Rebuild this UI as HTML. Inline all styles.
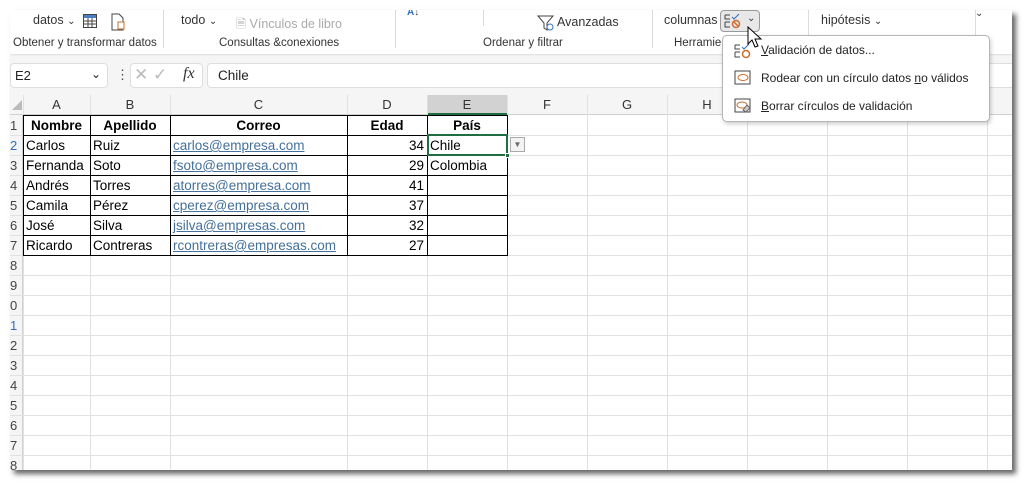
<!DOCTYPE html>
<html><head><meta charset="utf-8"><style>
*{margin:0;padding:0;box-sizing:border-box}
body{width:1026px;height:486px;background:#fff;position:relative;overflow:hidden;font-family:"Liberation Sans",sans-serif;color:#222}
.win{position:absolute;left:10px;top:10px;width:1002px;height:460px;background:#fff;box-shadow:4px 4px 5px rgba(0,0,0,.6);overflow:hidden}
.a{position:absolute;white-space:nowrap}
.rib{font-size:12.5px;color:#333}
.sep{position:absolute;width:1px;background:#dcdcdc;top:0;height:38px}
.grid div{position:absolute}
.cell{position:absolute;font-size:13.5px;line-height:20px;color:#000;white-space:nowrap}
.lnk{color:#44709a;text-decoration:underline}
.menu{position:absolute;left:722px;top:35px;width:268px;height:87px;background:#fff;border:1px solid #b5b5b5;border-radius:5px;box-shadow:1px 2px 4px rgba(0,0,0,.2)}
.menu .it{position:absolute;left:38px;font-size:12px;color:#222}
</style></head><body>
<div class="win">
 <div class="a" style="left:0;top:0;width:1002px;height:45px;background:#fff;border-bottom:1px solid #e3e3e3;box-shadow:0 2px 3px rgba(0,0,0,.08)"></div>
 <div class="a rib" style="left:23px;top:3px">datos <span style="font-size:10px">⌄</span></div>
 <svg class="a" style="left:72px;top:3px" width="16" height="16"><rect x="1.5" y="1.5" width="13" height="13" fill="none" stroke="#444"/><rect x="2" y="2" width="12" height="3" fill="#4a7fc1"/><path d="M1 8h14M1 11h14M6 5v10M10 5v10" stroke="#444"/></svg>
 <svg class="a" style="left:100px;top:3px" width="16" height="18"><path d="M2 1h7l4 4v12H2z" fill="none" stroke="#444"/><rect x="8" y="9" width="6" height="7" fill="#fff" stroke="#c8702a"/></svg>
 <div class="a rib" style="left:171px;top:3px">todo <span style="font-size:10px">⌄</span></div>
 <div class="a rib" style="left:226px;top:5px;color:#aaa">🗎 Vínculos de libro</div>
 <div class="a" style="left:397px;top:-3px;font-size:10px;color:#2f6fc0;font-weight:bold">A<span style="color:#444">↓</span></div>
 <svg class="a" style="left:527px;top:4px" width="18" height="18"><path d="M1 2h15l-6 7v7l-3-2V9z" fill="none" stroke="#444"/><circle cx="13" cy="13" r="3" fill="none" stroke="#2f6fc0"/></svg>
 <div class="a rib" style="left:547px;top:5px;font-size:12.5px">Avanzadas</div>
 <div class="a rib" style="left:654px;top:3px">columnas</div>
 <div class="a" style="left:710px;top:0px;width:40px;height:22px;border:1px solid #999;border-radius:4px;background:#e8e8e8"></div>
 <svg class="a" style="left:714px;top:3px" width="18" height="16"><path d="M1 2h5M1 2v4h5M1 9h5M1 9v5h5" stroke="#444" fill="none"/><path d="M8 4l2 2 5-5" stroke="#2f6fc0" fill="none"/><circle cx="12" cy="11" r="3.5" fill="none" stroke="#d06a2a" stroke-width="1.5"/><path d="M10 9l4 4" stroke="#d06a2a" stroke-width="1.5"/></svg>
 <div class="a rib" style="left:737px;top:3px;font-size:10px">⌄</div>
 <div class="a rib" style="left:811px;top:3px">hipótesis <span style="font-size:10px">⌄</span></div>
 <div class="a rib" style="left:965px;top:-2px;font-size:10px">⌄</div>
 <div class="a rib" style="left:3px;top:27px;font-size:11.5px">Obtener y transformar datos</div>
 <div class="a rib" style="left:209px;top:27px;font-size:11.5px">Consultas &amp;conexiones</div>
 <div class="a rib" style="left:473px;top:27px;font-size:11.5px">Ordenar y filtrar</div>
 <div class="a rib" style="left:664px;top:27px;font-size:11.5px">Herramie</div>
 <div class="sep" style="left:153px"></div><div class="sep" style="left:385px"></div><div class="sep" style="left:473px;height:16px"></div><div class="sep" style="left:642px"></div><div class="sep" style="left:798px"></div><div class="sep" style="left:965px"></div>
 <div class="a" style="left:0;top:46px;width:1002px;height:39px;background:#f5f5f5"></div>
 <div class="a" style="left:0;top:53px;width:98px;height:25px;background:#fff;border:1px solid #dedede;border-radius:4px;font-size:13px;padding:4px 4px">E2<span style="position:absolute;right:6px;top:3px;font-size:12px">⌄</span></div>
 <div class="a" style="left:106px;top:57px;font-size:13px;color:#444">⋮</div>
 <div class="a" style="left:120px;top:53px;width:73px;height:25px;background:#fff;border:1px solid #dedede;border-radius:4px"></div>
 <div class="a" style="left:124px;top:55px;font-size:17px;color:#bbb">✕ ✓</div>
 <div class="a" style="left:173px;top:55px;font-size:16px;font-style:italic;font-family:'Liberation Serif',serif;color:#333">fx</div>
 <div class="a" style="left:197px;top:53px;width:810px;height:25px;background:#fff;border:1px solid #dedede;border-radius:4px;font-size:13.5px;padding:4px 10px">Chile</div>
 <div class="a" style="left:0;top:85px;width:1002px;height:20px;background:#f5f5f5;border-bottom:1px solid #d0d0d0"></div>
 <div class="a" style="left:417px;top:85px;width:80px;height:20px;background:#d2d2d2;border-bottom:2px solid #1e6e42"></div>
 <div class="a" style="left:0;top:105px;width:13px;height:360px;background:#f5f5f5;border-right:1px solid #d0d0d0"></div>
 <div id="g"></div>
 <div class="a" style="left:2px;top:90px;width:0;height:0;border-left:10px solid transparent;border-bottom:10px solid #bbb"></div>
</div>
<div class="menu">
 <svg class="a" style="left:11px;top:7px" width="18" height="16"><path d="M1 2h5M1 2v4h5M1 9h5M1 9v5h5" stroke="#444" fill="none"/><path d="M8 4l2 2 5-5" stroke="#2f6fc0" fill="none"/><circle cx="12" cy="11" r="3.5" fill="none" stroke="#d06a2a" stroke-width="1.5"/></svg>
 <div class="it" style="top:7px"><u>V</u>alidación de datos...</div>
 <svg class="a" style="left:11px;top:34px" width="18" height="16"><rect x="1" y="1" width="15" height="13" fill="none" stroke="#444"/><ellipse cx="9" cy="7.5" rx="5" ry="3" fill="none" stroke="#d06a2a"/></svg>
 <div class="it" style="top:35px">Rodear con un círculo datos <u>n</u>o válidos</div>
 <svg class="a" style="left:11px;top:62px" width="18" height="16"><rect x="1" y="1" width="15" height="13" fill="none" stroke="#444"/><ellipse cx="8" cy="7" rx="5" ry="3" fill="none" stroke="#d06a2a"/><path d="M9 12l4-5 3 3-4 4z" fill="#ccc" stroke="#666"/></svg>
 <div class="it" style="top:63px"><u>B</u>orrar círculos de validación</div>
</div>
<svg class="a" style="left:746px;top:26px" width="18" height="24"><path d="M2 1v17l4-4 3 7 3-1-3-7h6z" fill="#fff" stroke="#000"/></svg>
<script>
var cols=[13,80,160,337,417,497,577,657,737,817,897,977,1057];
var names="ABCDEFGHIJKL";
var h='';
for(var i=0;i<12;i++){h+='<div class="cell" style="left:'+cols[i]+'px;top:85px;width:'+(cols[i+1]-cols[i])+'px;text-align:center;font-size:13px;color:#333">'+names[i]+'</div>';
 h+='<div style="position:absolute;left:'+cols[i]+'px;top:85px;width:1px;height:380px;background:#e1e1e1"></div>';}
for(var r=0;r<18;r++){var y=105+r*20;h+='<div style="position:absolute;left:0;top:'+(y+20)+'px;width:1002px;height:1px;background:#e1e1e1"></div>';
 var n=String((r+1)%10);h+='<div class="cell" style="left:0;top:'+(y+1)+'px;font-size:13px;color:'+(r==1||r==10?'#2f6fc0':'#444')+'">'+n+'</div>';}
var data=[["<b>Nombre</b>","<b>Apellido</b>","<b>Correo</b>","<b>Edad</b>","<b>País</b>"],
["Carlos","Ruiz","carlos@empresa.com","34","Chile"],["Fernanda","Soto","fsoto@empresa.com","29","Colombia"],
["Andrés","Torres","atorres@empresa.com","41",""],["Camila","Pérez","cperez@empresa.com","37",""],
["José","Silva","jsilva@empresas.com","32",""],["Ricardo","Contreras","rcontreras@empresas.com","27",""]];
for(var r=0;r<7;r++)for(var c=0;c<5;c++){var t=data[r][c],st='left:'+(cols[c]+3)+'px;top:'+(106+r*20)+'px;width:'+(cols[c+1]-cols[c]-6)+'px;';
 if(r==0)st+='text-align:center;';else if(c==3)st+='text-align:right;';
 h+='<div class="cell'+(r>0&&c==2?' lnk':'')+'" style="'+st+'">'+t+'</div>';}
for(var r=0;r<=7;r++)h+='<div style="position:absolute;left:13px;top:'+(105+r*20)+'px;width:485px;height:1px;background:#000"></div>';
for(var c=0;c<=5;c++)h+='<div style="position:absolute;left:'+cols[c]+'px;top:105px;width:1px;height:141px;background:#000"></div>';
h+='<div style="position:absolute;left:417px;top:124px;width:81px;height:22px;border:2px solid #1e6e42"></div>';
h+='<div style="position:absolute;left:495px;top:143px;width:5px;height:5px;background:#1e6e42;border:1px solid #fff"></div>';
h+='<div style="position:absolute;left:500px;top:127px;width:15px;height:15px;border:1px solid #aaa;background:#f3f3f3;font-size:8px;text-align:center;line-height:14px;color:#666">▼</div>';
document.getElementById('g').innerHTML=h;
</script>
</body></html>
